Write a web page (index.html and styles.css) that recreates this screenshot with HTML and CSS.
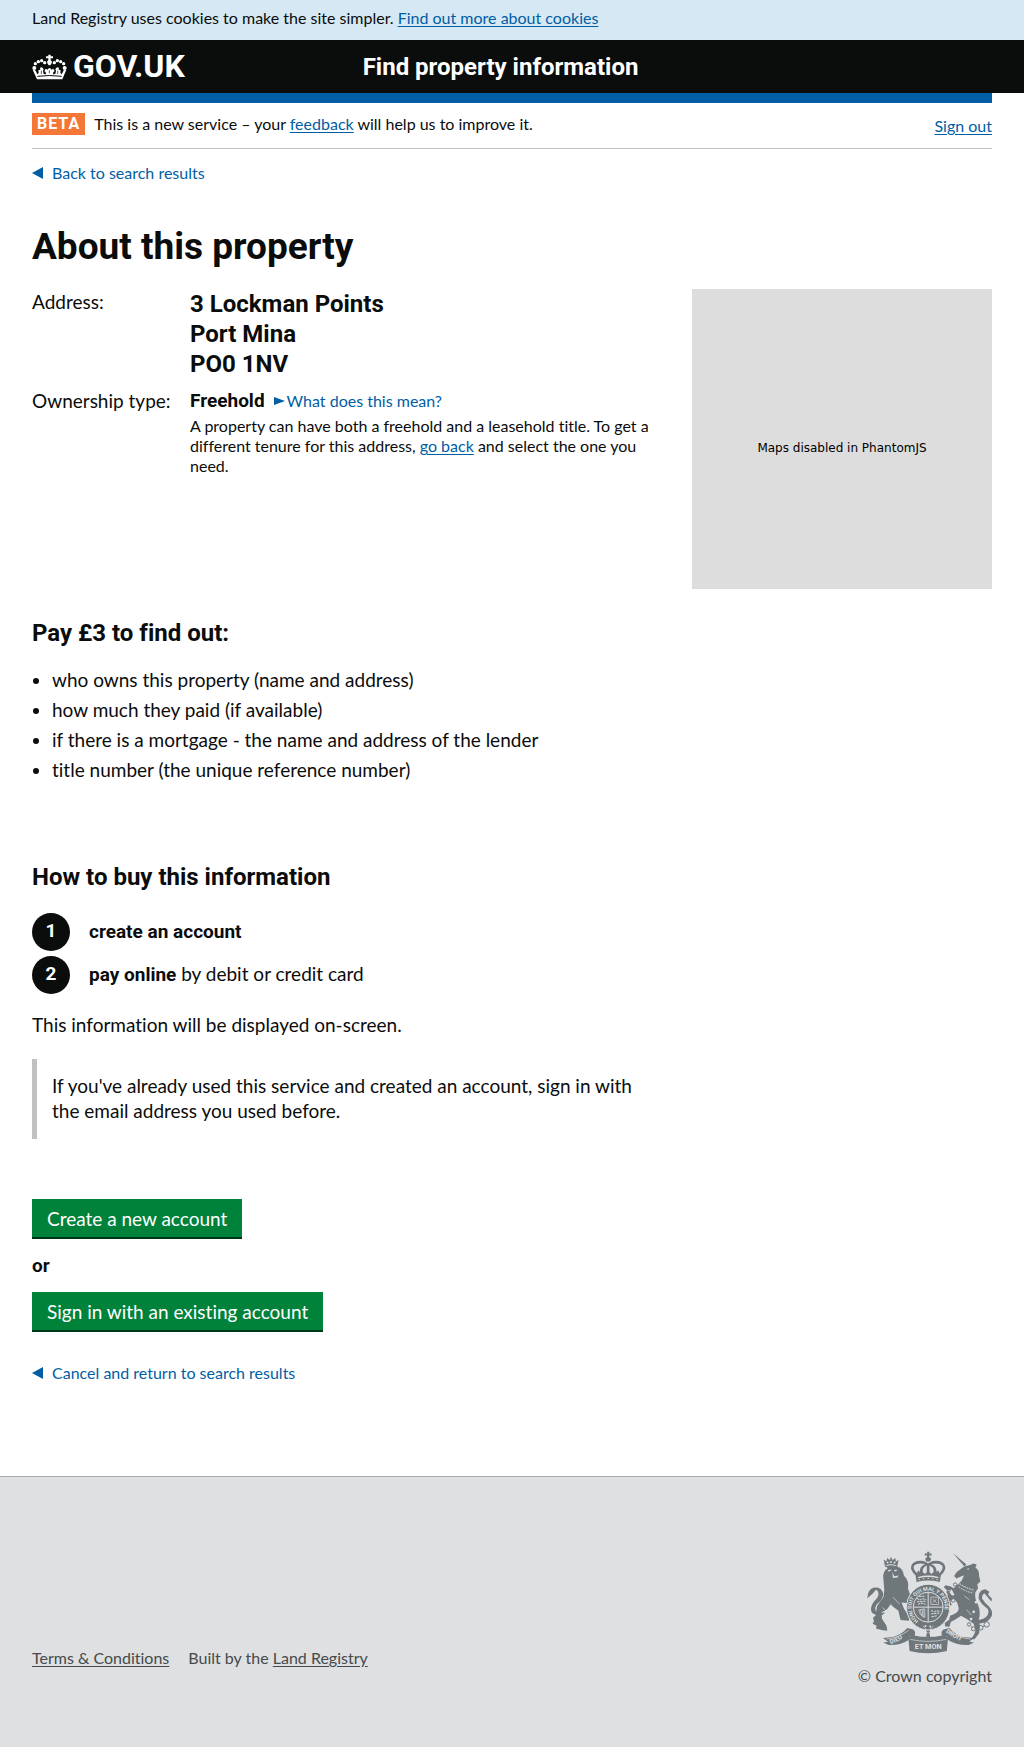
FILE: index.html
```html
<!DOCTYPE html>
<html lang="en">
<head>
<meta charset="utf-8">
<meta name="viewport" content="width=device-width, initial-scale=1">
<title>Find property information</title>
<link rel="stylesheet" href="styles.css">
</head>
<body>
<div class="cookie-bar">
  <p class="container small">Land Registry uses cookies to make the site simpler. <a href="#cookies">Find out more about cookies</a></p>
</div>

<header class="site-header">
  <div class="container site-header-inner">
    <a class="logo" href="#home">
      <svg class="logo-crown" viewBox="0 0 105 78" aria-hidden="true">
        <g fill="#fff">
          <path d="M49 2h7v5h7v6h-7v5q6 4 3 10l-4 6h-5l-4-6q-3-6 3-10v-5h-7V7h7z"/>
          <circle cx="7" cy="42" r="6"/><circle cx="10" cy="29" r="5"/><circle cx="19" cy="23" r="5"/><circle cx="29" cy="20" r="5"/><circle cx="38" cy="26" r="5"/>
          <circle cx="98" cy="42" r="6"/><circle cx="95" cy="29" r="5"/><circle cx="86" cy="23" r="5"/><circle cx="76" cy="20" r="5"/><circle cx="67" cy="26" r="5"/>
          <path d="M2 47l8 2 6 12 4-4-1-8 6-2-1-6 6-1 5 6-2 5 2 9 7 1-1-7-4-2 4-8 6 3 3-4h5l3 4 6-3 4 8-4 2-1 7 7-1 2-9-2-5 5-6 6 1-1 6 6 2-1 8 4 4 6-12 8-2-12 29H15z"/>
        </g>
        <path d="M16 67q36-5 73 0" fill="none" stroke="#0b0c0c" stroke-width="3"/>
        <path d="M28 50v10M77 50v10M52 49v9" stroke="#0b0c0c" stroke-width="2"/>
      </svg>
      <span>GOV.UK</span>
    </a>
    <span class="service-name">Find property information</span>
  </div>
</header>

<main class="container">
  <div class="phase-banner small">
    <p class="phase-text"><strong class="phase-tag">BETA</strong><span>This is a new service – your <a href="#feedback">feedback</a> will help us to improve it.</span></p>
    <a class="sign-out" href="#sign-out">Sign out</a>
  </div>

  <a class="back-link small" href="#results">Back to search results</a>

  <h1>About this property</h1>

  <div class="property">
    <dl class="facts">
      <dt>Address:</dt>
      <dd class="address">3 Lockman Points<br>Port Mina<br>PO0 1NV</dd>
      <dt>Ownership type:</dt>
      <dd>
        <div class="tenure">
          <strong>Freehold</strong>
          <details class="small">
            <summary>What does this mean?</summary>
          </details>
        </div>
        <p class="tenure-note small">A property can have both a freehold and a leasehold title. To get a different tenure for this address, <a href="#results">go back</a> and select the one you need.</p>
      </dd>
    </dl>
    <div class="map">Maps disabled in PhantomJS</div>
  </div>

  <h2>Pay £3 to find out:</h2>
  <ul class="bullets">
    <li>who owns this property (name and address)</li>
    <li>how much they paid (if available)</li>
    <li>if there is a mortgage - the name and address of the lender</li>
    <li>title number (the unique reference number)</li>
  </ul>

  <h2>How to buy this information</h2>
  <ol class="steps">
    <li><span><strong>create an account</strong></span></li>
    <li><span><strong>pay online</strong> by debit or credit card</span></li>
  </ol>
  <p>This information will be displayed on-screen.</p>

  <div class="inset">If you've already used this service and created an account, sign in with the email address you used before.</div>

  <div class="actions">
    <button type="button" class="button">Create a new account</button>
    <strong>or</strong>
    <button type="button" class="button">Sign in with an existing account</button>
  </div>

  <a class="back-link small" href="#results">Cancel and return to search results</a>
</main>

<footer class="site-footer small">
  <div class="container site-footer-inner">
    <ul class="footer-links">
      <li><a href="#terms">Terms &amp; Conditions</a></li>
      <li>Built by the <a href="#land-registry">Land Registry</a></li>
    </ul>
    <div class="copyright">
      <svg class="crest" viewBox="50 38 376 308" aria-hidden="true">
        <defs>
          <path id="garter" d="M205 247A50 50 0 1 1 263 247"/>
          <path id="scroll-left" d="M121 317Q155 306 182 279"/>
          <path id="scroll-right" d="M286 281Q315 305 360 316"/>
        </defs>
        <g fill="#6f777b">
          <!-- imperial crown -->
          <path d="M231 39h7l-1 6 7-1v7l-7-1 1 7 5 3-3 9h-12l-3-9 5-3 1-7-7 1v-7l7 1z"/>
          <path d="M196 110q-18-16-12-30 8-17 36-13l14 7 14-7q28-4 36 13 6 14-12 30l-3 20q-35-9-70 0z"/>
          <!-- lion -->
          <path d="M104 82l-4-19 8 6 3-11 8 7 3-11 5 11 8-7 2 11 8-5-4 20q18 6 20 27 17 18 12 38l8 24-4 22-23-3 8 20 13 20 2 15-26-2-7-29-24-17-10 14-16 8 1 20 14 22 2 14-18-2-16-5 2-8-12-6 4-8-3-10 8-7 4-28 20-28 2-22-3-35q-2-21 14-30l-9-4 2-12z"/>
          <path d="M98 229q-42 5-35-24 2-11 17-26 10-14-2-26-11 14-27 26 2-27 18-31 25-7 30 20-3 17-18 28-9 11-5 21 9 10 28 4z"/>
          <!-- unicorn -->
          <path d="M309 44l40 34-6 6z"/>
          <path d="M342 84l18-5 10-4 10 3-4 9q12 8 11 24l4 18-9 8 2 12-8 13-51-26 10-10 7-16-13 5-10 5-7-8 8-12z"/>
          <path d="M324 136l52 26q-3 18 6 32 12 26 4 51l4 18-3 22-13 17-14 2q14-14 16-28l-5-20q-22-16-38-24l-15 10-16 9-4 14-13-1-1-10 13-10 3-12q25-8 26-22l-4-16-10-14-12 8 5 10-6 5-10-14-3-16 8-3-6-10 6-4 12 16 7-3-8-16-14 2-10-9 5-6 16 4 9 5z"/>
          <path d="M365 243q28 4 42-7 14-12 5-26-20-14-26-30-2-26 20-28l12 8-4 8 12 13-2 8-21-25q-8 4-7 16 8 13 21 24 18 20 2 38-18 20-54 9z"/>
          <!-- scrolls -->
          <path d="M98 299l30-3q28-8 43-27l18 4q11 9 2 22l-14-2-2 12q-22 16-60 15l-16-8 14-2z"/>
          <path d="M370 299l-30-3q-24-6-42-27l-18 4q-11 9-2 22l14-2 2 12q24 16 62 15l16-8-14-2z"/>
          <path d="M174 294l18-3q42 10 84 0l18 3-4 44q-56 14-112 0z"/>
          <path d="M229 282h10v-8h-10z"/>
          <path d="M234 281q10 10 3 18 8-8 14 0 2 8-6 10-4-2-3-5-5 0-5 5l2 6h-10l2-6q0-5-5-5 1 3-3 5-8-2-6-10 6-8 14 0-7-8 3-18z"/>
        </g>
        <!-- garter and shield -->
        <ellipse cx="234" cy="206" rx="65" ry="69" fill="#6f777b" stroke="#dee0e2" stroke-width="3"/>
        <circle cx="234" cy="206" r="45" fill="#6f777b" stroke="#dee0e2" stroke-width="3"/>
        <g fill="none" stroke="#dee0e2" stroke-width="3">
          <path d="M234 162v88M190 206h88"/>
          <path d="M200 180l10 4 6-3 12 2M201 190l26-2M204 197l8-3 14 3M207 174l17-1" stroke-dasharray="7 2"/>
          <path d="M242 176h23v22h-23zM248 182l12 11M259 182l-12 11" stroke-width="2"/>
          <path d="M206 214l18-3v26q-16-6-18-23M211 214l3 18M216 213l2 22M221 212v25" stroke-width="2"/>
          <path d="M243 216l10 4 6-3 11 2M243 226l24-2M244 235l16-3" stroke-dasharray="7 2"/>
          <path d="M218 262l10 11M250 262l-10 11" stroke-width="2"/>
        </g>
        <!-- crown openings and jewels -->
        <g fill="#dee0e2">
          <path d="M200 104q-14-15-8-23 9-10 33-5-18 8-16 24l-5-5zM268 104q14-15 8-23-9-10-33-5 18 8 16 24l5-5z"/>
          <path d="M218 101q-3-14 12-20v19l-5 6zM250 101q3-14-12-20v19l5 6z"/>
          <path d="M203 115q31-9 62 0l-1 4q-30-8-60 0z"/>
          <circle cx="207" cy="123" r="2"/><circle cx="220" cy="120" r="2"/><circle cx="234" cy="119" r="2"/><circle cx="248" cy="120" r="2"/><circle cx="261" cy="123" r="2"/>
          <circle cx="112" cy="72" r="3"/><circle cx="122" cy="70" r="3"/><circle cx="133" cy="72" r="3"/>
          <path d="M107 80q15-6 31 0v2q-16-4-31 0z"/>
          <path d="M112 96l8-3 4 3-9 3zM131 95l7-2 3 3-7 3zM126 100l6 13 13-2-4 6-13 1z"/>
          <path d="M350 91l7-2-2 5z"/>
          <path d="M122 197l13 24M128 176l20 21M97 207l10 10M350 214l14 16M343 172l15 12" stroke="#dee0e2" stroke-width="2"/>
          <circle cx="226" cy="263" r="3"/><circle cx="240" cy="264" r="3"/>
        </g>
        <g fill="none" stroke="#dee0e2" stroke-width="3">
          <path d="M329 135q20 15 44 19M326 145q20 14 44 19" stroke-dasharray="5 3"/>
          <path d="M108 302q36-3 67-26M361 302q-36-3-67-26M180 303q54 12 108 0" stroke-width="2"/>
        </g>
        <g fill="none" stroke="#6f777b" stroke-width="3">
          <circle cx="315" cy="138" r="5"/><circle cx="296" cy="154" r="5"/><circle cx="309" cy="185" r="6"/>
          <circle cx="357" cy="258" r="5"/><circle cx="370" cy="271" r="6"/><circle cx="392" cy="268" r="7"/><circle cx="410" cy="258" r="8"/>
          <path d="M363 264l4 3M377 271l8-2M398 265l5-3"/>
        </g>
        <g fill="#dee0e2"><circle cx="371" cy="220" r="4"/><circle cx="378" cy="191" r="4"/><circle cx="363" cy="242" r="4"/></g>
        <g class="motto">
          <text font-size="16"><textPath href="#garter">HONI SOIT QUI MAL Y PENSE</textPath></text>
          <text font-size="19"><textPath href="#scroll-left">DIEU</textPath></text>
          <text font-size="19"><textPath href="#scroll-right">DROIT</textPath></text>
          <text font-size="22" x="234" y="331" text-anchor="middle">ET MON</text>
        </g>
      </svg>
      <span>© Crown copyright</span>
    </div>
  </div>
</footer>
</body>
</html>
```
FILE: styles.css
```css
* { box-sizing: border-box; }

body {
  margin: 0;
  background: #fff;
  color: #0b0c0c;
  font-family: Lato, "Liberation Sans", Arial, sans-serif;
  font-size: 19px;
  font-variant-ligatures: none;
  line-height: 25px;
}

h1, h2, p, ul, ol, dl, dd { margin: 0; padding: 0; }
ul, ol { list-style: none; }
a { color: #005ea5; text-underline-offset: 2px; }
strong { font-weight: 700; }

h1, h2, strong, .logo, .service-name, .address, .steps li::before {
  font-family: Roboto, "Liberation Sans", Arial, sans-serif;
}

.container {
  max-width: 1024px;
  margin: 0 auto;
  padding: 0 32px;
}

.small { font-size: 16px; line-height: 20px; }

.cookie-bar { background: #d5e8f3; padding: 8px 0 12px; }

.site-header { background: #0b0c0c; color: #fff; }
.site-header-inner {
  display: grid;
  grid-template-columns: 1fr 2fr;
  align-items: center;
  column-gap: 16px;
  height: 53px;
}
.logo {
  display: flex;
  align-items: center;
  gap: 6px;
  color: #fff;
  font-size: 32px;
  font-weight: 700;
  text-decoration: none;
}
.logo-crown { width: 35px; height: 26px; }
.service-name { font-size: 24px; font-weight: 700; padding-top: 2px; }

.phase-banner {
  display: flex;
  justify-content: space-between;
  align-items: flex-start;
  border-top: 10px solid #005ea5;
  border-bottom: 1px solid #bfc1c3;
  padding: 10px 0 12px;
}
.phase-text { display: flex; align-items: center; gap: 9px; }
.phase-tag {
  background: #f47738;
  color: #fff;
  padding: 1px 5px;
  letter-spacing: 1px;
}
.sign-out { padding-top: 3px; }

.back-link {
  display: flex;
  align-items: center;
  gap: 9px;
  width: fit-content;
  margin-top: 14px;
  text-decoration: none;
}
.back-link::before {
  content: "";
  border: solid transparent;
  border-width: 6px 11px 6px 0;
  border-right-color: #005ea5;
}

h1 { margin-top: 44px; font-size: 37px; line-height: 40px; }
h2 { font-size: 24px; line-height: 30px; }

.property {
  display: flex;
  justify-content: space-between;
  gap: 30px;
  margin: 22px 0 29px;
}
.facts {
  display: grid;
  grid-template-columns: 158px 1fr;
  align-content: start;
  row-gap: 9px;
  max-width: 620px;
}
.address { font-size: 24px; line-height: 30px; font-weight: 700; }
.tenure { display: flex; align-items: center; gap: 9px; }
.tenure summary {
  display: flex;
  align-items: center;
  gap: 2px;
  color: #005ea5;
  cursor: pointer;
}
.tenure summary::before {
  content: "";
  border: solid transparent;
  border-width: 4px 0 4px 11px;
  border-left-color: #005ea5;
}
.tenure-note { margin-top: 3px; }
.map {
  display: flex;
  flex: 0 0 300px;
  align-items: center;
  justify-content: center;
  aspect-ratio: 1;
  padding-top: 18px;
  background: #ddd;
  color: #000;
  font: 12px/16px "DejaVu Sans", sans-serif;
}

.bullets { margin: 17px 0 77px; padding-left: 20px; list-style: disc; line-height: 30px; }

.steps { counter-reset: step; display: grid; gap: 5px; margin: 21px 0 18px; }
.steps li { counter-increment: step; display: flex; gap: 19px; line-height: 35px; }
.steps li::before {
  content: counter(step);
  width: 38px;
  height: 38px;
  border-radius: 50%;
  background: #0b0c0c;
  color: #fff;
  font-weight: 700;
  text-align: center;
}

.inset {
  max-width: 620px;
  margin: 22px 0 60px;
  padding: 14px 15px 16px;
  border-left: 5px solid #bfc1c3;
}

.actions { display: flex; flex-direction: column; align-items: flex-start; gap: 14px; }
.button {
  border: 0;
  border-bottom: 2px solid #003618;
  background: #00823b;
  color: #fff;
  padding: 7px 15px 6px;
  font: inherit;
}
.actions + .back-link { margin-top: 31px; }

.site-footer {
  margin-top: 93px;
  border-top: 1px solid #a1acb2;
  background: #dee0e2;
  color: #454a4c;
}
.site-footer a { color: inherit; }
.site-footer-inner {
  display: flex;
  justify-content: space-between;
  align-items: flex-end;
  padding-top: 74px;
  padding-bottom: 61px;
}
.footer-links { display: flex; gap: 19px; padding-bottom: 18px; }
.copyright { display: flex; flex-direction: column; align-items: flex-end; gap: 12px; }
.crest { width: 125px; height: 103px; }
.motto { fill: #dee0e2; font-family: Roboto, sans-serif; font-weight: 700; }
```
